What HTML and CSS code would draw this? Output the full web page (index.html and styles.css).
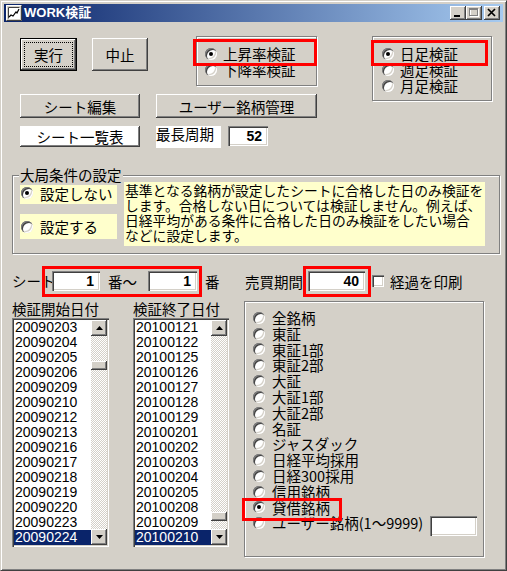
FILE: index.html
```html
<!DOCTYPE html>
<html lang="ja">
<head>
<meta charset="utf-8">
<title>WORK検証</title>
<link rel="stylesheet" href="styles.css">
</head>
<body>
<div class="window">
  <div class="titlebar">
    <svg class="app-icon" width="16" height="16" viewBox="0 0 16 16">
      <rect x="0" y="0" width="16" height="16" fill="#d4d0c8"/>
      <path d="M0.5 15.5V0.5H15.5" fill="none" stroke="#fff"/>
      <path d="M0.5 15.5H15.5V0.5" fill="none" stroke="#404040"/>
      <rect x="2" y="2" width="12" height="12" fill="#fff"/>
      <path d="M2.5 13.5V2.5H13.5" fill="none" stroke="#404040"/>
      <polyline points="3,12 5,10 7,11 10,7 11,8 13,4" fill="none" stroke="#000" stroke-width="1.2"/>
    </svg>
    <span class="title">WORK検証</span>
    <div class="caption-btns">
      <span class="cbtn"><svg width="16" height="14" viewBox="0 0 16 14"><rect x="4" y="9" width="6" height="2" fill="#000"/></svg></span>
      <span class="cbtn"><svg width="16" height="14" viewBox="0 0 16 14"><rect x="4.5" y="3.5" width="8" height="7" fill="none" stroke="#fff"/><rect x="3.5" y="2.5" width="8" height="7" fill="none" stroke="#808080"/><rect x="3" y="2" width="9" height="2" fill="#808080"/></svg></span>
      <span class="cbtn close"><svg width="16" height="14" viewBox="0 0 16 14"><path d="M4 3L11 10M11 3L4 10" stroke="#000" stroke-width="1.7"/></svg></span>
    </div>
  </div>

  <div class="client">
    <div class="top">
      <div class="top-left">
        <div class="row1">
          <button class="btn btn-run default">実行</button>
          <button class="btn btn-stop">中止</button>
          <div class="group g1">
            <div class="opt"><span class="radio on"></span><span>上昇率検証</span></div>
            <div class="opt"><span class="radio"></span><span>下降率検証</span></div>
          </div>
        </div>
        <div class="row2">
          <button class="btn btn-sheet">シート編集</button>
          <button class="btn btn-user">ユーザー銘柄管理</button>
        </div>
        <div class="row3">
          <button class="btn btn-list">シート一覧表</button>
          <span class="maxlabel">最長周期</span>
          <span class="field f52">52</span>
        </div>
      </div>
      <div class="group g2">
        <div class="opt"><span class="radio on"></span><span>日足検証</span></div>
        <div class="opt"><span class="radio"></span><span>週足検証</span></div>
        <div class="opt"><span class="radio"></span><span>月足検証</span></div>
      </div>
    </div>

    <div class="group taikyoku">
      <span class="legend">大局条件の設定</span>
      <div class="tk-inner">
        <div class="tk-opts">
          <div class="tk-opt o1"><span class="radio on"></span><span>設定しない</span></div>
          <div class="tk-opt o2"><span class="radio"></span><span>設定する</span></div>
        </div>
        <div class="tk-desc">基準となる銘柄が設定したシートに合格した日のみ検証を<br>します。合格しない日については検証しません。例えば、<br>日経平均がある条件に合格した日のみ検証をしたい場合<br>などに設定します。</div>
      </div>
    </div>

    <div class="sheet-row">
      <span class="sr-label">シート</span>
      <span class="field f-sheet1">1</span>
      <span class="sr-mid">番～</span>
      <span class="field f-sheet2">1</span>
      <span class="sr-ban">番</span>
      <span class="sr-period">売買期間</span>
      <span class="field f-period">40</span>
      <span class="checkbox"></span>
      <span class="sr-print">経過を印刷</span>
    </div>

    <div class="bottom">
      <div class="listcol c1">
        <div class="listlabel">検証開始日付</div>
        <div class="listbox">
          <div class="items">
            <div class="item">20090203</div>
            <div class="item">20090204</div>
            <div class="item">20090205</div>
            <div class="item">20090206</div>
            <div class="item">20090209</div>
            <div class="item">20090210</div>
            <div class="item">20090212</div>
            <div class="item">20090213</div>
            <div class="item">20090216</div>
            <div class="item">20090217</div>
            <div class="item">20090218</div>
            <div class="item">20090219</div>
            <div class="item">20090220</div>
            <div class="item">20090223</div>
            <div class="item sel">20090224</div>
          </div>
          <div class="scrollbar">
            <span class="sb-btn"><svg width="7" height="4" viewBox="0 0 7 4"><path d="M3.5 0L7 4H0Z" fill="#000"/></svg></span>
            <div class="track"><span class="thumb thumb-a"></span></div>
            <span class="sb-btn"><svg width="7" height="4" viewBox="0 0 7 4"><path d="M0 0H7L3.5 4Z" fill="#000"/></svg></span>
          </div>
        </div>
      </div>
      <div class="listcol c2">
        <div class="listlabel">検証終了日付</div>
        <div class="listbox">
          <div class="items">
            <div class="item">20100121</div>
            <div class="item">20100122</div>
            <div class="item">20100125</div>
            <div class="item">20100126</div>
            <div class="item">20100127</div>
            <div class="item">20100128</div>
            <div class="item">20100129</div>
            <div class="item">20100201</div>
            <div class="item">20100202</div>
            <div class="item">20100203</div>
            <div class="item">20100204</div>
            <div class="item">20100205</div>
            <div class="item">20100208</div>
            <div class="item">20100209</div>
            <div class="item sel">20100210</div>
          </div>
          <div class="scrollbar">
            <span class="sb-btn"><svg width="7" height="4" viewBox="0 0 7 4"><path d="M3.5 0L7 4H0Z" fill="#000"/></svg></span>
            <div class="track"><span class="thumb thumb-b"></span></div>
            <span class="sb-btn"><svg width="7" height="4" viewBox="0 0 7 4"><path d="M0 0H7L3.5 4Z" fill="#000"/></svg></span>
          </div>
        </div>
      </div>
      <div class="group market">
        <div class="mk"><span class="radio"></span><span>全銘柄</span></div>
        <div class="mk"><span class="radio"></span><span>東証</span></div>
        <div class="mk"><span class="radio"></span><span>東証1部</span></div>
        <div class="mk"><span class="radio"></span><span>東証2部</span></div>
        <div class="mk"><span class="radio"></span><span>大証</span></div>
        <div class="mk"><span class="radio"></span><span>大証1部</span></div>
        <div class="mk"><span class="radio"></span><span>大証2部</span></div>
        <div class="mk"><span class="radio"></span><span>名証</span></div>
        <div class="mk"><span class="radio"></span><span>ジャスダック</span></div>
        <div class="mk"><span class="radio"></span><span>日経平均採用</span></div>
        <div class="mk"><span class="radio"></span><span>日経300採用</span></div>
        <div class="mk"><span class="radio"></span><span>信用銘柄</span></div>
        <div class="mk"><span class="radio on"></span><span>貸借銘柄</span></div>
        <div class="mk"><span class="radio"></span><span>ユーザー銘柄(1～9999)</span><span class="field userbox"></span></div>
      </div>
    </div>
  </div>

  <span class="mark m1"></span>
  <span class="mark m2"></span>
  <span class="mark m3"></span>
  <span class="mark m4"></span>
  <span class="mark m5"></span>
</div>
</body>
</html>
```

FILE: styles.css
```css
* { box-sizing: border-box; }
html, body { margin: 0; padding: 0; }
body {
  width: 507px;
  height: 571px;
  overflow: hidden;
  background: #d4d0c8;
  font-family: "Noto Sans CJK JP", "Noto Sans", sans-serif;
  font-size: 14.5px;
  color: #000;
}

.window {
  position: relative;
  width: 507px;
  height: 571px;
  border: 1px solid;
  border-color: #d4d0c8 #404040 #404040 #d4d0c8;
  box-shadow: inset 1px 1px #fff, inset -1px -1px #808080;
  padding: 3px;
  background: #d4d0c8;
}

/* title bar */
.titlebar {
  display: flex;
  align-items: center;
  height: 18px;
  padding: 0 3px 0 2px;
  background: linear-gradient(to right, #0a246a, #a6caf0);
}
.app-icon { flex: none; }
.title {
  margin-left: 2px;
  color: #fff;
  font-family: "Liberation Sans", "Noto Sans CJK JP", sans-serif;
  font-weight: bold;
  font-size: 13px;
  line-height: 18px;
}
.caption-btns { margin-left: auto; display: flex; }
.cbtn {
  display: block;
  width: 16px;
  height: 14px;
  background: #d4d0c8;
  box-shadow: inset -1px -1px #404040, inset 1px 1px #fff, inset -2px -2px #808080;
}
.cbtn svg { display: block; }
.cbtn.close { margin-left: 2px; }

.client { margin-top: 1px; }

/* common controls */
.btn {
  position: relative;
  display: block;
  padding: 0;
  border: none;
  font: inherit;
  color: #000;
  background: #d4d0c8;
  box-shadow: inset -1px -1px #404040, inset 1px 1px #fff, inset -2px -2px #808080;
  flex: none;
}
.btn.default {
  border: 1px solid #000;
}
.btn.default::after {
  content: "";
  position: absolute;
  left: 3px; top: 3px; right: 3px; bottom: 3px;
  border: 1px dotted #000;
}

.group {
  border: 1px solid #808080;
  box-shadow: inset 1px 1px #fff, 1px 1px #fff;
  flex: none;
}

.radio {
  position: relative;
  flex: none;
  width: 12px;
  height: 12px;
  border-radius: 50%;
  background: #fff;
  box-shadow: inset 1px 1px #808080, inset 2px 2px #404040, inset -1px -1px #fff, inset -2px -2px #d4d0c8;
}
.radio.on::after {
  content: "";
  position: absolute;
  left: 4px; top: 4px;
  width: 4px; height: 4px;
  border-radius: 50%;
  background: #000;
}

.field {
  display: block;
  flex: none;
  background: #fff;
  box-shadow: inset 1px 1px #808080, inset 2px 2px #404040, inset -1px -1px #fff, inset -2px -2px #d4d0c8;
  text-align: right;
  font-family: "Liberation Sans", sans-serif;
  font-weight: bold;
  font-size: 14px;
  line-height: 20px;
  padding-right: 6px;
  height: 20px;
}

.opt {
  display: flex;
  align-items: center;
  gap: 6px;
  height: 16px;
  line-height: 16px;
  white-space: nowrap;
}

/* top section */
.top { display: flex; margin-top: 14px; }
.top-left { margin-left: 16px; width: 297px; }
.row1 { display: flex; align-items: flex-start; }
.btn-run { margin-top: 2px; width: 57px; height: 33px; }
.btn-stop { margin-top: 2px; margin-left: 15px; width: 56px; height: 33px; }
.g1 { margin-left: 48px; width: 121px; height: 50px; padding: 9px 0 0 8px; }
.row2 { display: flex; margin-top: 8px; gap: 16px; }
.btn-sheet { width: 120px; height: 24px; }
.btn-user { width: 161px; height: 24px; }
.row3 { display: flex; align-items: flex-start; margin-top: 8px; }
.btn-list { width: 120px; height: 21px; background: #fff; line-height: 19px; }
.maxlabel {
  margin-left: 16px;
  width: 65px;
  height: 22px;
  background: #fff;
  line-height: 16px;
  white-space: nowrap;
}
.f52 { margin-left: 7px; width: 40px; }
.g2 { margin-left: 55px; width: 120px; height: 65px; padding: 9px 0 0 9px; }

/* taikyoku */
.taikyoku {
  position: relative;
  margin: 27px 0 0 8px;
  width: 488px;
  height: 79px;
  padding: 6px 0 0 7px;
}
.legend {
  position: absolute;
  left: 6px;
  top: -11px;
  padding: 0 1px;
  background: #d4d0c8;
  line-height: 20px;
  white-space: nowrap;
}
.tk-inner { display: flex; gap: 7px; }
.tk-opts { width: 97px; display: flex; flex-direction: column; }
.tk-opt {
  display: flex;
  align-items: center;
  gap: 7px;
  padding-left: 1px;
  background: #ffffcc;
  white-space: nowrap;
}
.tk-opt.o1 { height: 22px; }
.tk-opt.o2 { height: 25px; margin-top: 10px; }
.tk-desc {
  width: 361px;
  height: 64px;
  background: #ffffcc;
  font-size: 13.8px;
  line-height: 15px;
  padding: 1px 0 0 1px;
  white-space: nowrap;
}

/* sheet row */
.sheet-row {
  display: flex;
  align-items: center;
  margin: 17px 0 0 8px;
  height: 20px;
  white-space: nowrap;
}
.sr-label { width: 40px; flex: none; line-height: 20px; }
.f-sheet1 { width: 48px; }
.sr-mid { width: 48px; flex: none; padding-left: 8px; }
.f-sheet2 { width: 49px; }
.sr-ban { width: 48px; flex: none; padding-left: 8px; }
.sr-period { width: 63px; flex: none; }
.f-period { width: 57px; }
.checkbox {
  flex: none;
  margin-left: 7px;
  width: 12px;
  height: 12px;
  background: #fff;
  box-shadow: inset 1px 1px #808080, inset 2px 2px #404040, inset -1px -1px #fff, inset -2px -2px #d4d0c8;
}
.sr-print { margin-left: 6px; }

/* bottom */
.bottom { display: flex; align-items: flex-start; margin-top: 6px; }
.listcol { display: flex; flex-direction: column; flex: none; }
.listcol.c1 { margin-left: 8px; width: 97px; }
.listcol.c2 { margin-left: 24px; width: 96px; }
.listlabel {
  height: 21px;
  padding-top: 2px;
  line-height: 19px;
  white-space: nowrap;
}
.listbox {
  display: flex;
  height: 229px;
  padding: 2px;
  background: #fff;
  box-shadow: inset 1px 1px #808080, inset 2px 2px #404040, inset -1px -1px #fff, inset -2px -2px #d4d0c8;
}
.items { flex: 1; min-width: 0; }
.item {
  height: 15px;
  line-height: 15px;
  padding-left: 1px;
  font-family: "Liberation Sans", sans-serif;
  font-size: 14px;
  white-space: nowrap;
}
.item.sel { background: #0a246a; color: #fff; }
.scrollbar {
  width: 16px;
  flex: none;
  display: flex;
  flex-direction: column;
  background: repeating-conic-gradient(#fff 0 25%, #d4d0c8 0 50%) 0 0 / 2px 2px;
}
.sb-btn {
  display: flex;
  align-items: center;
  justify-content: center;
  width: 16px;
  height: 16px;
  flex: none;
  background: #d4d0c8;
  box-shadow: inset -1px -1px #404040, inset 1px 1px #fff, inset -2px -2px #808080;
}
.sb-btn svg { display: block; }
.track { flex: 1; }
.thumb {
  display: block;
  width: 16px;
  height: 9px;
  background: #d4d0c8;
  box-shadow: inset -1px -1px #404040, inset 1px 1px #fff, inset -2px -2px #808080;
}
.thumb-a { margin-top: 25px; }
.thumb-b { margin-top: 176px; }

.market {
  margin: 4px 0 0 15px;
  width: 240px;
  height: 256px;
  padding: 8px 7px 0 8px;
}
.mk {
  display: flex;
  align-items: center;
  gap: 7px;
  height: 15.8px;
  line-height: 15.8px;
  white-space: nowrap;
}
.userbox {
  margin-left: auto;
  align-self: flex-start;
  margin-top: 1px;
  width: 47px;
}

/* red annotation marks */
.mark {
  position: absolute;
  border: 3px solid #ff0000;
}
.m1 { left: 192px; top: 38px; width: 124px; height: 27px; }
.m2 { left: 370px; top: 39px; width: 117px; height: 26px; }
.m3 { left: 41px; top: 265px; width: 160px; height: 31px; }
.m4 { left: 302px; top: 265px; width: 68px; height: 31px; }
.m5 { left: 241px; top: 497px; width: 100px; height: 23px; }
```
